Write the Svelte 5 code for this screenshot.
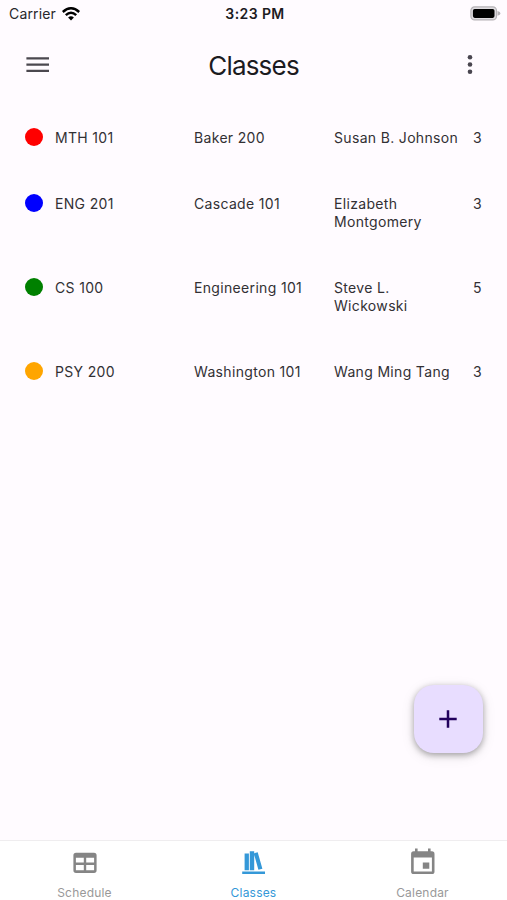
<script lang="ts">
	type Course = {
		name: string;
		location: string;
		instructor: string;
		credits: number;
		color: string;
	};

	const courses: Course[] = [
		{ name: 'MTH 101', location: 'Baker 200', instructor: 'Susan B. Johnson', credits: 3, color: '#ff0000' },
		{ name: 'ENG 201', location: 'Cascade 101', instructor: 'Elizabeth Montgomery', credits: 3, color: '#0000ff' },
		{ name: 'CS 100', location: 'Engineering 101', instructor: 'Steve L. Wickowski', credits: 5, color: '#008000' },
		{ name: 'PSY 200', location: 'Washington 101', instructor: 'Wang Ming Tang', credits: 3, color: '#ffa500' }
	];

	const tabs = ['Schedule', 'Classes', 'Calendar'];
	let activeTab = $state('Classes');
</script>

<div class="screen">
	<div class="status-bar">
		<div class="carrier">
			<span>Carrier</span>
			<svg width="18" height="14" viewBox="0 0 18 14" aria-hidden="true">
				<g fill="none" stroke="#000" stroke-width="2.5">
					<path d="M.8 5 Q9 -2.4 17.2 5" />
					<path d="M3.8 8.1 Q9 3.3 14.2 8.1" />
				</g>
				<path d="M6.1 10.5 Q9 8 11.9 10.5 L9 13.6 Z" />
			</svg>
		</div>
		<span class="time">3:23 PM</span>
		<svg class="battery" width="31" height="15" viewBox="0 0 31 15" aria-hidden="true">
			<rect x=".9" y=".9" width="25.6" height="13" rx="3.7" fill="#e0dde1" stroke="#b5b2b6" stroke-width="1.2" />
			<rect x="2.9" y="2.9" width="21.6" height="9" rx="1.8" />
			<path d="M27.5 5.1 Q30.5 6 30.5 7.4 Q30.5 8.8 27.5 9.7 Z" fill="#b5b2b6" />
		</svg>
	</div>

	<header class="app-bar">
		<button type="button" aria-label="Open menu">
			<svg width="24" height="18" viewBox="0 0 24 18">
				<path d="M1.4 2.4h22.6M1.4 8.6h22.6M1.4 14.8h22.6" stroke="#4b484f" stroke-width="2.3" />
			</svg>
		</button>
		<h1>Classes</h1>
		<button type="button" aria-label="More options">
			<svg width="6" height="20" viewBox="0 0 6 20" fill="#49454f">
				<circle cx="3" cy="2.3" r="2.3" />
				<circle cx="3" cy="9.5" r="2.3" />
				<circle cx="3" cy="16.7" r="2.3" />
			</svg>
		</button>
	</header>

	<main>
		{#each courses as course (course.name)}
			<div class="course">
				<span class="dot" style="background: {course.color}"></span>
				<span>{course.name}</span>
				<span>{course.location}</span>
				<span>{course.instructor}</span>
				<span class="credits">{course.credits}</span>
			</div>
		{/each}
	</main>

	<button class="fab" type="button" aria-label="Add class">
		<svg width="18" height="18" viewBox="0 0 18 18">
			<path d="M9 .3v17.4M.3 9h17.4" stroke="#21005d" stroke-width="2.5" />
		</svg>
	</button>

	<nav>
		{#each tabs as tab (tab)}
			<button type="button" class:active={activeTab === tab} onclick={() => (activeTab = tab)}>
				<svg width="28" height="28" viewBox="0 0 28 28" fill="currentColor" aria-hidden="true">
					{#if tab === 'Schedule'}
						<path
							fill-rule="evenodd"
							d="M5 4.7h18a2.6 2.6 0 0 1 2.6 2.6v15a2.6 2.6 0 0 1-2.6 2.6H5a2.6 2.6 0 0 1-2.6-2.6v-15A2.6 2.6 0 0 1 5 4.7ZM4.9 9.7v4.9h7.9V9.7Zm10.3 0v4.9h7.9V9.7ZM4.9 17v5.3h7.9V17Zm10.3 0v5.3h7.9V17Z"
						/>
					{:else if tab === 'Classes'}
						<path d="M2.2 23.5h22.8v2.6H2.2ZM4.6 5.6h4.3v16.7H4.6ZM9.8 3.2h4.4v19.1H9.8ZM13.8 5.4l3.9-1.2 4.7 16.5-4 1.1Z" />
					{:else}
						<path
							fill-rule="evenodd"
							d="M6 .6h2.6v2.7h10.4V.6h2.6v2.7h1.3a2.6 2.6 0 0 1 2.6 2.6v17.6a2.6 2.6 0 0 1-2.6 2.6H4.7a2.6 2.6 0 0 1-2.6-2.6V5.9a2.6 2.6 0 0 1 2.6-2.6H6ZM4.7 9.4v14.1h18.2V9.4Zm9.1 5.1h6.5v6.3h-6.5Z"
						/>
					{/if}
				</svg>
				<span>{tab}</span>
			</button>
		{/each}
	</nav>
</div>

<style>
	:global(body) {
		margin: 0;
	}

	.screen {
		position: relative;
		display: flex;
		flex-direction: column;
		width: 100%;
		height: 100vh;
		overflow: hidden;
		background: #fffbff;
		color: #323034;
		font-family: Inter, Roboto, sans-serif;
	}

	button {
		padding: 0;
		border: 0;
		background: none;
		font: inherit;
		cursor: pointer;
	}

	svg {
		display: block;
	}

	.status-bar {
		display: grid;
		grid-template-columns: 1fr auto 1fr;
		align-items: center;
		height: 27px;
		box-sizing: border-box;
		padding: 0 6px 0 9px;
		font-size: 14px;
		color: #29272b;
	}

	.carrier {
		display: flex;
		align-items: center;
		gap: 6px;
		letter-spacing: 0.15px;
	}

	.time {
		font-weight: 600;
		letter-spacing: 0.4px;
		color: #1d1b1f;
	}

	.battery {
		justify-self: end;
	}

	.app-bar {
		display: flex;
		align-items: center;
		justify-content: space-between;
		height: 76px;
		box-sizing: border-box;
		padding: 0 34px 0 25px;
		margin-bottom: 1px;
	}

	.app-bar h1 {
		flex: 1;
		margin: 0;
		padding-right: 9px;
		text-align: center;
		font-size: 26px;
		font-weight: 400;
		letter-spacing: -0.8px;
		color: #1c1b1f;
	}

	main {
		flex: 1;
	}

	.course {
		display: grid;
		grid-template-columns: 30px 139px 140px 128px 1fr;
		align-items: start;
		padding: 24px 25px 23px;
		font-size: 14px;
		line-height: 18px;
		letter-spacing: 0.33px;
	}

	.course span:not(.dot) {
		padding-top: 1px;
	}

	.dot {
		width: 18px;
		height: 18px;
		border-radius: 50%;
	}

	.credits {
		padding-left: 11px;
	}

	.fab {
		position: absolute;
		right: 24px;
		bottom: 147px;
		display: grid;
		place-items: center;
		width: 69px;
		height: 68px;
		padding-right: 1px;
		border-radius: 20px;
		background: #e8ddff;
		box-shadow: 0 2px 6px rgb(0 0 0 / 32%), 0 3px 14px rgb(0 0 0 / 10%);
	}

	nav {
		display: grid;
		grid-template-columns: repeat(3, 1fr);
		height: 60px;
		box-sizing: border-box;
		border-top: 1px solid #efedef;
		background: #fff;
	}

	nav button {
		display: flex;
		flex-direction: column;
		align-items: center;
		gap: 9px;
		padding-top: 7px;
		color: #858585;
	}

	nav span {
		font-size: 12px;
		line-height: 15px;
		letter-spacing: 0.2px;
		color: #999;
	}

	nav .active,
	nav .active span {
		color: #3498d8;
	}
</style>
